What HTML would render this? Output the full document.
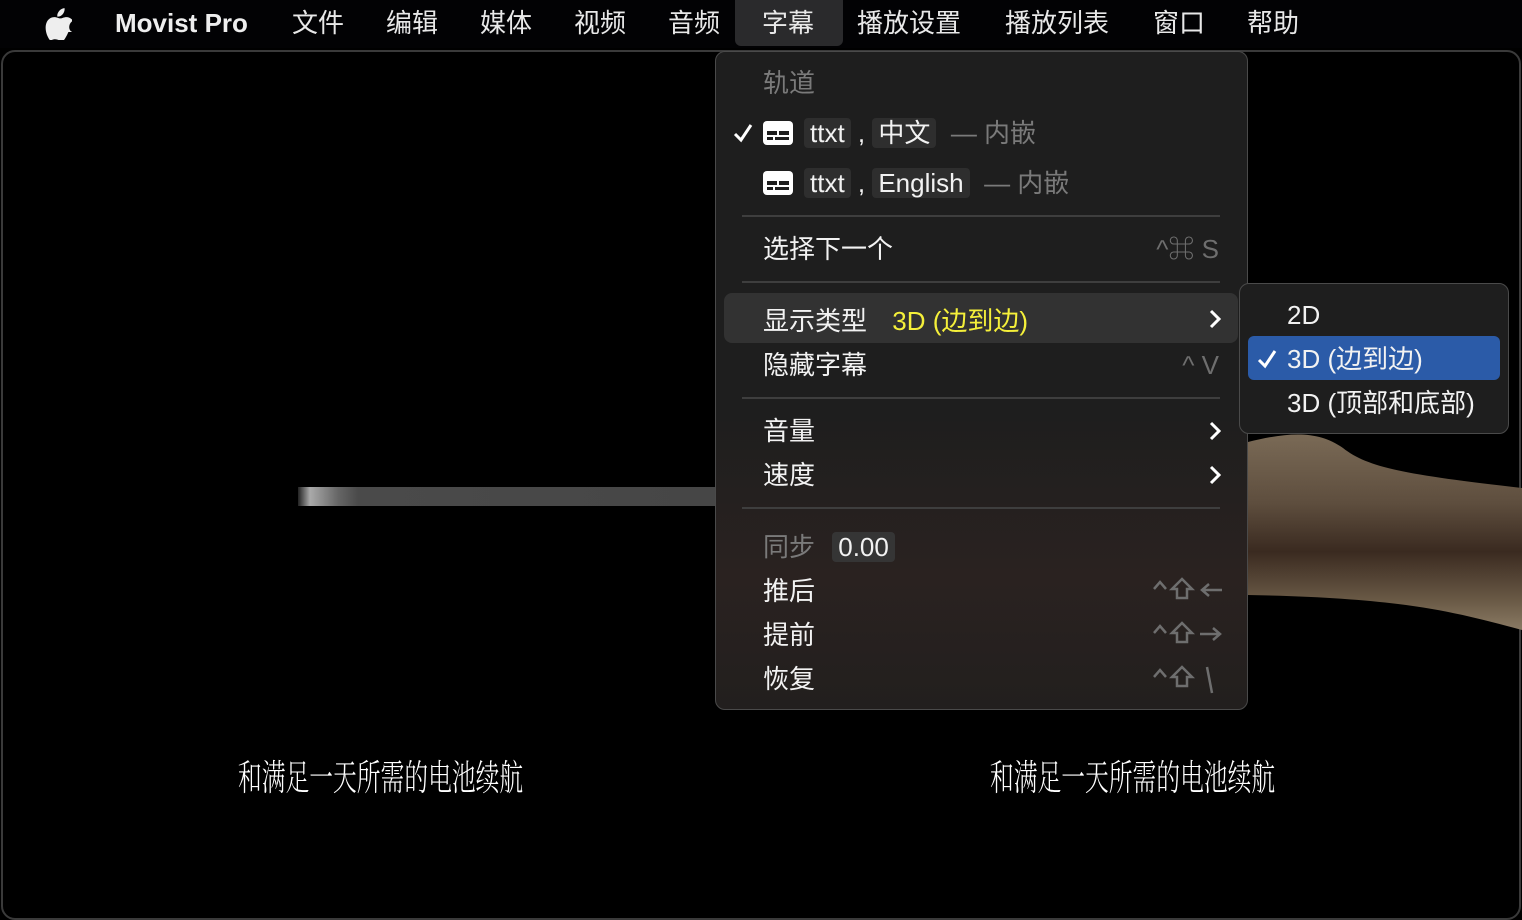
<!DOCTYPE html>
<html><head><meta charset="utf-8"><style>
*{margin:0;padding:0;box-sizing:border-box}
body{width:1522px;height:908px;background:#000;overflow:hidden;position:relative;font-family:"Liberation Sans","Noto Sans CJK SC",sans-serif;color:#fff}
.mb{position:absolute;top:0;left:0;width:1522px;height:48px;background:#020204}
.mb span{position:absolute;top:6px;font-size:26px;color:#e8e8e8;line-height:34px}
.win{position:absolute;left:1px;top:50px;width:1520px;height:870px;border:2px solid #3a3a3a;border-radius:14px;background:#000}
.bar{position:absolute;left:298px;top:487px;width:418px;height:19px;background:linear-gradient(90deg,#222 0,#aaa 12px,#666 40px,#4a4a4a 60px,#464646 100%)}
.sub{position:absolute;top:750px;font-family:"Noto Serif CJK SC",serif;font-size:36px;color:#fff;transform:scaleX(.66);transform-origin:left top;white-space:nowrap;font-weight:300}
.menu{position:absolute;left:715px;top:51px;width:533px;height:659px;border:1.5px solid #4a4a4a;border-radius:10px;background:linear-gradient(180deg,#1e1e1e 0,#1e1e1e 55%,#2a2220 80%,#221f1e 100%)}
.it{position:absolute;left:47px;font-size:26px;line-height:32px;color:#f2f2f2;white-space:nowrap}
.g{color:#7a7a7a}
.sc{position:absolute;right:28px;font-size:26px;color:#6e6e6e;line-height:32px;white-space:nowrap}
.sep{position:absolute;left:26px;width:478px;height:2px;background:#3e3e3e}
.tag{background:#2e2e2e;border-radius:4px;padding:0 6px}
.chev{position:absolute;right:26px}
.smenu{position:absolute;left:1239px;top:283px;width:270px;height:151px;border:1.5px solid #4a4a4a;border-radius:10px;background:#1e1e1e}
svg{display:block}
</style></head><body>
<div class="mb">
<svg style="position:absolute;left:44px;top:8px" width="28" height="32" viewBox="0 0 170 200"><path fill="#eee" d="M150 150c-8 18-12 26-22 42-14 22-34 22-40 8-7-3-18-7-30-4-12 3-18 10-25 3C15 177 0 130 12 95c8-24 28-38 50-38 16 0 26 8 38 8 12 0 20-8 39-8 14 0 30 8 40 22-35 19-29 70 0 71zM115 38c8-10 13-23 11-37-12 1-26 8-34 18-7 9-14 22-11 35 13 1 26-6 34-16z"/></svg>
<span style="left:115px;font-weight:bold;color:#eee">Movist Pro</span>
<span style="left:292px">文件</span><span style="left:386px">编辑</span><span style="left:480px">媒体</span><span style="left:574px">视频</span><span style="left:668px">音频</span>
<div style="position:absolute;left:735px;top:0;width:108px;height:46px;background:#2a2a2c;border-radius:0 0 6px 6px"></div>
<span style="left:762px">字幕</span><span style="left:857px">播放设置</span><span style="left:1005px">播放列表</span><span style="left:1153px">窗口</span><span style="left:1247px">帮助</span>
</div>
<div class="win"></div>
<svg style="position:absolute;left:1248px;top:430px" width="274" height="210"><defs><linearGradient id="a" x1="0" y1="0" x2="0" y2="1"><stop offset="0" stop-color="#7a6a56"/><stop offset=".35" stop-color="#5e4e3e"/><stop offset=".6" stop-color="#3a2a20"/><stop offset=".85" stop-color="#6a5a46"/><stop offset="1" stop-color="#8a7a64"/></linearGradient></defs><path d="M0 12 C40 2 70 0 95 18 C120 38 160 45 274 58 L274 200 C200 180 150 168 0 165 Z" fill="url(#a)"/></svg>
<div class="bar"></div>
<div class="sub" style="left:238px">和满足一天所需的电池续航</div>
<div class="sub" style="left:990px">和满足一天所需的电池续航</div>
<div class="menu">
<div class="it g" style="top:15px">轨道</div>
<svg style="position:absolute;left:17px;top:71px" width="20" height="20"><path d="M2 11 L8 17 L18 2" stroke="#fff" stroke-width="3" fill="none"/></svg>
<svg style="position:absolute;left:47px;top:69px" width="30" height="24"><rect width="30" height="24" rx="4" fill="#fff"/><rect x="4" y="10" width="10" height="4" fill="#1e1e1e"/><rect x="16" y="10" width="10" height="4" fill="#1e1e1e"/><rect x="4" y="16" width="6" height="3" fill="#1e1e1e"/><rect x="12" y="16" width="14" height="3" fill="#1e1e1e"/></svg>
<svg style="position:absolute;left:47px;top:119px" width="30" height="24"><rect width="30" height="24" rx="4" fill="#fff"/><rect x="4" y="10" width="10" height="4" fill="#1e1e1e"/><rect x="16" y="10" width="10" height="4" fill="#1e1e1e"/><rect x="4" y="16" width="6" height="3" fill="#1e1e1e"/><rect x="12" y="16" width="14" height="3" fill="#1e1e1e"/></svg>
<div class="it" style="top:65px;left:88px"><span class="tag">ttxt</span> , <span class="tag">中文</span> <span class="g">&nbsp;— 内嵌</span></div>
<div class="it" style="top:115px;left:88px"><span class="tag">ttxt</span> , <span class="tag">English</span> <span class="g">&nbsp;— 内嵌</span></div>
<div class="sep" style="top:163px"></div>
<div class="it" style="top:181px">选择下一个</div><div class="sc" style="top:181px">^⌘ S</div>
<div class="sep" style="top:229px"></div>
<div style="position:absolute;left:8px;top:241px;width:514px;height:50px;background:#323232;border-radius:8px"></div>
<div class="it" style="top:253px">显示类型 <span style="color:#f5f03a;margin-left:18px">3D (边到边)</span></div>
<svg class="chev" style="top:257px" width="12" height="20"><path d="M2 2 L10 10 L2 18" stroke="#fff" stroke-width="3" fill="none"/></svg>
<div class="it" style="top:297px">隐藏字幕</div><div class="sc" style="top:297px">^ V</div>
<div class="sep" style="top:345px"></div>
<div class="it" style="top:363px">音量</div>
<svg class="chev" style="top:369px" width="12" height="20"><path d="M2 2 L10 10 L2 18" stroke="#fff" stroke-width="3" fill="none"/></svg>
<div class="it" style="top:407px">速度</div>
<svg class="chev" style="top:413px" width="12" height="20"><path d="M2 2 L10 10 L2 18" stroke="#fff" stroke-width="3" fill="none"/></svg>
<div class="sep" style="top:455px"></div>
<div class="it" style="top:479px"><span class="g">同步</span> <span class="tag" style="margin-left:10px;background:#353535">0.00</span></div>
<div class="it" style="top:523px">推后</div>
<div class="it" style="top:567px">提前</div>
<div class="it" style="top:611px">恢复</div>
<svg style="position:absolute;left:436px;top:525px" width="72" height="130" fill="none" stroke="#6e6e6e" stroke-width="2.5">
<path d="M2 12 L8 5 L14 12"/><path d="M30 2 L20 12 H25 V21 H35 V12 H40 Z"/><path d="M50 13 H70 M57 7 L50 13 L57 19"/>
<path transform="translate(0,44)" d="M2 12 L8 5 L14 12"/><path transform="translate(0,44)" d="M30 2 L20 12 H25 V21 H35 V12 H40 Z"/><path transform="translate(0,44)" d="M48 13 H68 M61 7 L68 13 L61 19"/>
<path transform="translate(0,88)" d="M2 12 L8 5 L14 12"/><path transform="translate(0,88)" d="M30 2 L20 12 H25 V21 H35 V12 H40 Z"/><path transform="translate(0,88)" d="M55 2 L60 28"/>
</svg>
</div>
<div class="smenu">
<div class="it" style="left:47px;top:15px">2D</div>
<div style="position:absolute;left:8px;top:52px;width:252px;height:44px;background:#2b5ba8;border-radius:6px"></div>
<svg style="position:absolute;left:17px;top:65px" width="20" height="20"><path d="M2 11 L8 17 L18 2" stroke="#fff" stroke-width="3" fill="none"/></svg>
<div class="it" style="left:47px;top:59px">3D (边到边)</div>
<div class="it" style="left:47px;top:103px">3D (顶部和底部)</div>
</div>
</body></html>
